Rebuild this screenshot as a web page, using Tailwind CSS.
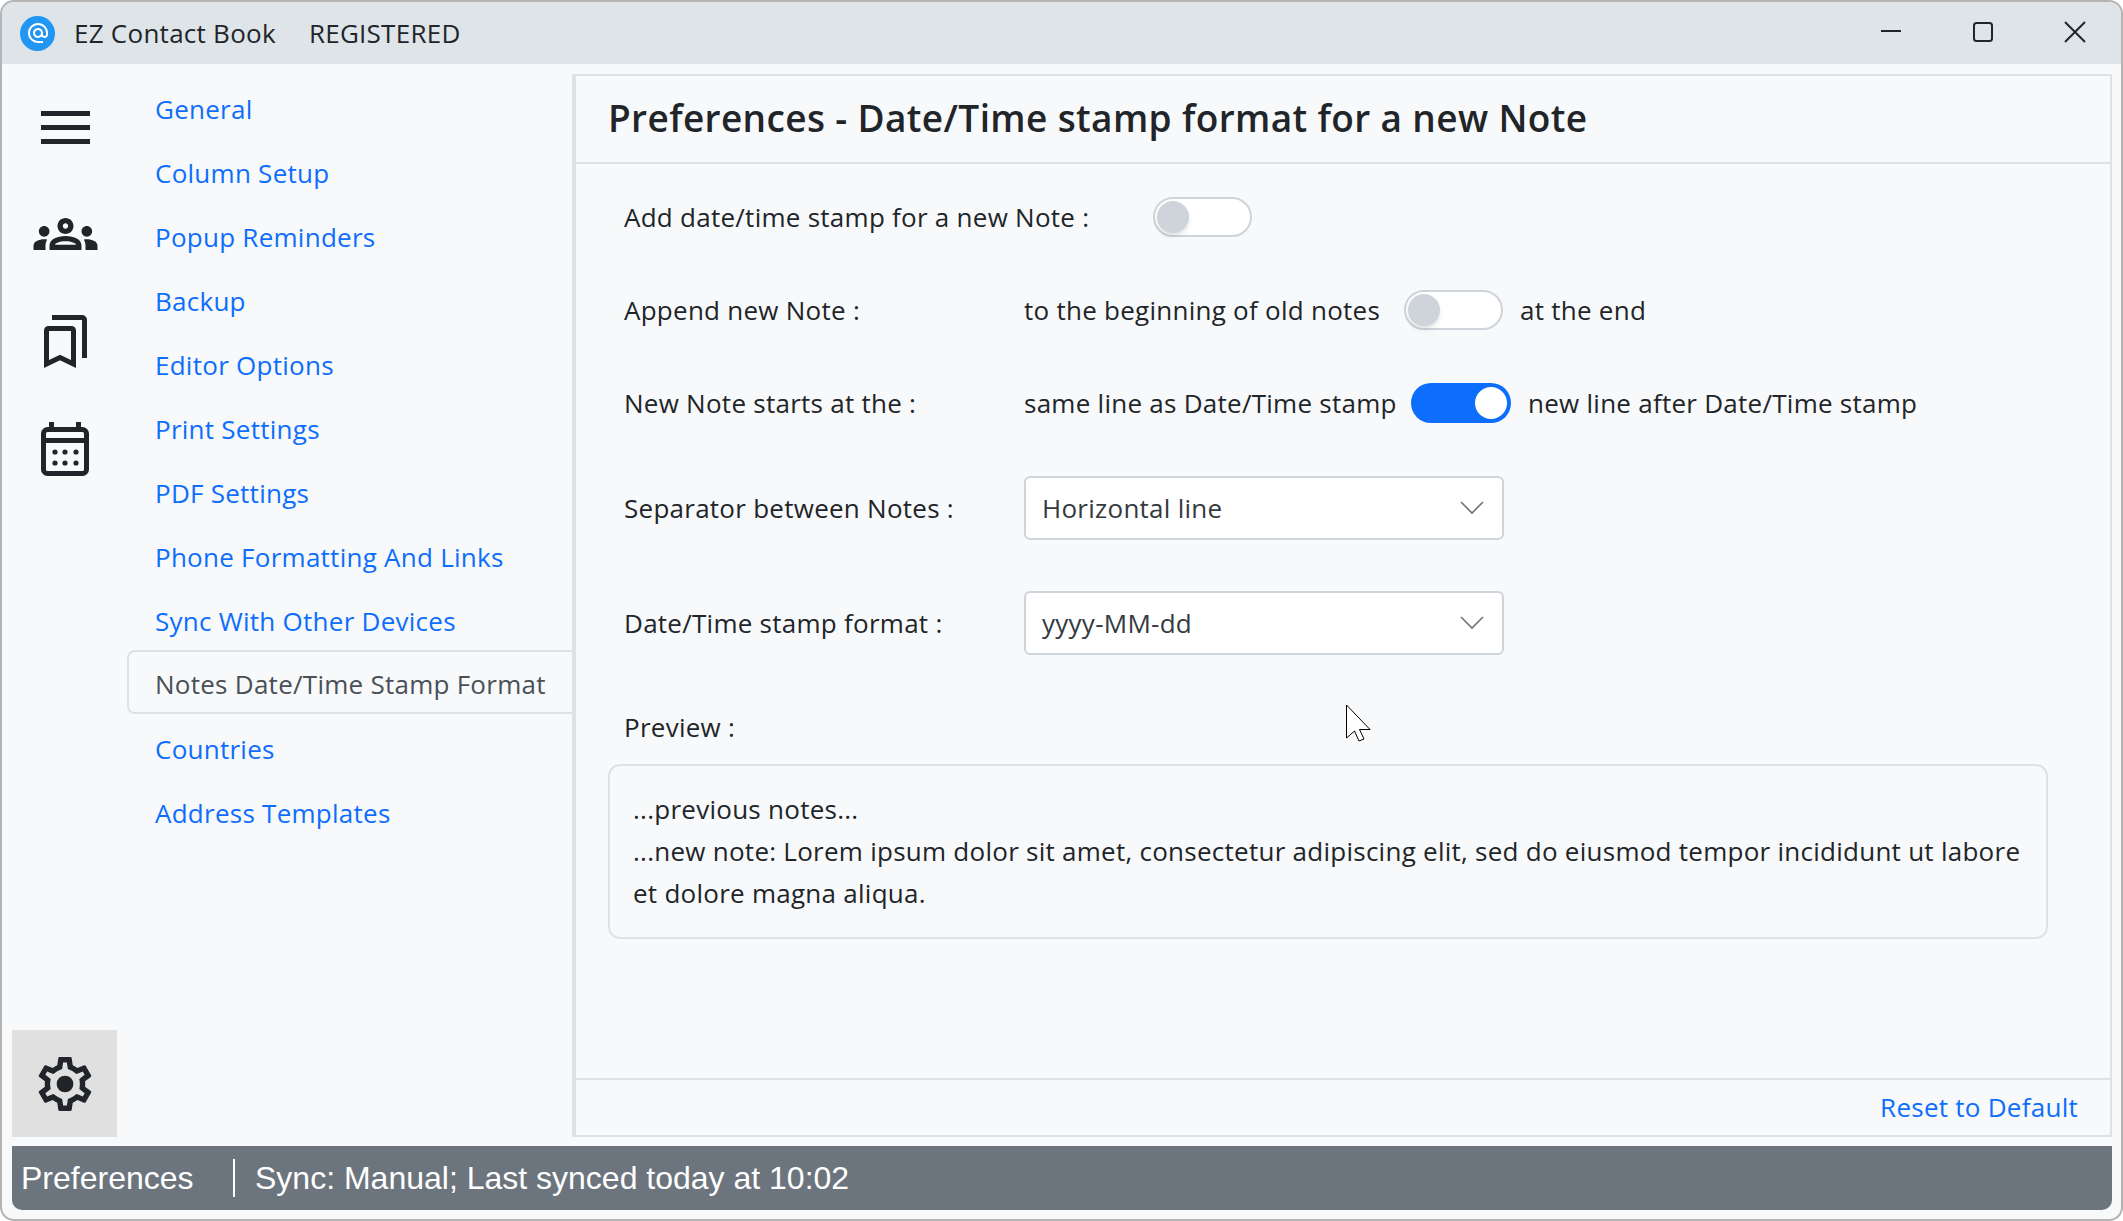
<!DOCTYPE html>
<html lang="en">
<head>
  <meta charset="UTF-8" />
  <meta name="viewport" content="width=device-width, initial-scale=1.0" />
  <title>EZ Contact Book</title>
  <script src="https://cdn.jsdelivr.net/npm/@tailwindcss/browser@4"></script>
</head>
<body class="bg-white font-['Open_Sans',sans-serif] text-[#212529] overflow-hidden">

<div class="relative w-[2123px] h-[1221px] flex flex-col bg-[#f8f9fa] border-2 border-[#b4b4b4] rounded-[14px] overflow-hidden text-[26px] tracking-[0.01em]">

  <!-- Title bar -->
  <div class="h-[62px] shrink-0 bg-[#dee4e7] flex items-center pl-[18px]">
    <div class="w-[35px] h-[35px] rounded-full bg-[#2196f3] flex items-center justify-center">
      <svg class="w-[24px] h-[24px]" viewBox="0 0 24 24" fill="#fff"><path d="M12 1.95c-5.52 0-10 4.48-10 10s4.48 10 10 10h5v-2h-5c-4.34 0-8-3.66-8-8s3.66-8 8-8 8 3.66 8 8v1.43c0 .79-.71 1.57-1.5 1.57s-1.5-.78-1.5-1.57v-1.43c0-2.76-2.24-5-5-5s-5 2.24-5 5 2.24 5 5 5c1.38 0 2.64-.56 3.54-1.47.65.89 1.77 1.47 2.96 1.47 1.97 0 3.5-1.6 3.5-3.57v-1.43c0-5.52-4.48-10-10-10zm0 13c-1.66 0-3-1.34-3-3s1.34-3 3-3 3 1.34 3 3-1.34 3-3 3z"/></svg>
    </div>
    <span class="ml-[19px]">EZ Contact Book</span>
    <span class="ml-[33px]">REGISTERED</span>
    <div class="ml-auto flex items-center pr-[35px] pb-[2px] gap-[70px]">
      <svg class="w-[22px] h-[22px]" viewBox="0 0 22 22" fill="none" stroke="#212529" stroke-width="2"><path d="M1 10h20"/></svg>
      <svg class="w-[22px] h-[22px]" viewBox="0 0 22 22" fill="none" stroke="#212529" stroke-width="2"><rect x="2" y="2" width="18" height="18" rx="2.5"/></svg>
      <svg class="w-[22px] h-[22px]" viewBox="0 0 22 22" fill="none" stroke="#212529" stroke-width="2"><path d="M1 1l20 20M21 1L1 21"/></svg>
    </div>
  </div>

  <!-- Body -->
  <div class="flex-1 min-h-0 flex pt-[10px] pl-[10px] pr-[9px]">

    <!-- Icon rail -->
    <div class="w-[105px] shrink-0 flex flex-col">
      <div class="h-[107px] flex items-center justify-center pl-[2px]">
        <svg class="w-[49px] h-[33px]" viewBox="0 0 49 33" fill="#212529"><rect width="49" height="5"/><rect y="14" width="49" height="5"/><rect y="28" width="49" height="5"/></svg>
      </div>
      <div class="h-[107px] flex items-center justify-center pl-[2px] pb-[2px]">
        <svg class="w-[65px] h-[32px]" viewBox="0 6 24 12" fill="#212529"><path d="M4,13c1.1,0,2-0.9,2-2c0-1.1-0.9-2-2-2s-2,0.9-2,2C2,12.1,2.9,13,4,13z M5.13,14.1C4.76,14.04,4.39,14,4,14 c-0.99,0-1.93,0.21-2.78,0.58C0.48,14.9,0,15.62,0,16.43V18l4.5,0v-1.61C4.5,15.56,4.73,14.78,5.13,14.1z M20,13c1.1,0,2-0.9,2-2 c0-1.1-0.9-2-2-2s-2,0.9-2,2C18,12.1,18.9,13,20,13z M24,16.43c0-0.81-0.48-1.53-1.22-1.85C21.93,14.21,20.99,14,20,14 c-0.39,0-0.76,0.04-1.13,0.1c0.4,0.68,0.63,1.46,0.63,2.29V18l4.5,0V16.43z M16.24,13.65c-1.17-0.52-2.61-0.9-4.24-0.9 c-1.63,0-3.07,0.39-4.24,0.9C6.68,14.13,6,15.21,6,16.39V18h12v-1.61C18,15.21,17.32,14.13,16.24,13.65z M8.07,16 c0.09-0.23,0.13-0.39,0.91-0.69c0.97-0.38,1.99-0.56,3.02-0.56s2.05,0.18,3.02,0.56c0.77,0.3,0.81,0.46,0.91,0.69H8.07z M12,8 c0.55,0,1,0.45,1,1s-0.45,1-1,1s-1-0.45-1-1S11.45,8,12,8 M12,6c-1.66,0-3,1.34-3,3c0,1.66,1.34,3,3,3s3-1.34,3-3 C15,7.34,13.66,6,12,6L12,6z"/></svg>
      </div>
      <div class="h-[107px] flex items-center justify-center pl-[2px]">
        <svg class="w-[43px] h-[53px]" viewBox="0 0 43 53" fill="none" stroke="#212529" stroke-width="5"><path d="M2.5 49V15.5a2 2 0 0 1 2-2H27.5a2 2 0 0 1 2 2V49L16 42.5Z"/><path d="M8 2.500H38a2.500 2.500 0 0 1 2.500 2.500V43"/></svg>
      </div>
      <div class="h-[107px] flex items-center justify-center pl-[1px]">
        <svg class="w-[48px] h-[54px]" viewBox="0 0 48 54" fill="#212529"><rect x="2.5" y="7.5" width="43" height="44" rx="4" fill="none" stroke="#212529" stroke-width="5"/><rect x="3" y="16" width="42" height="5"/><rect x="8" width="5" height="9"/><rect x="35" width="5" height="9"/><circle cx="14" cy="30" r="2.600"/><circle cx="24" cy="30" r="2.600"/><circle cx="35" cy="30" r="2.600"/><circle cx="14" cy="41" r="2.600"/><circle cx="24" cy="41" r="2.600"/><circle cx="35" cy="41" r="2.600"/></svg>
      </div>
      <div class="mt-auto h-[107px] bg-[#e0e0e0] flex items-center justify-center">
        <svg class="w-[54px] h-[54px]" viewBox="2 2 20 20" fill="#212529"><path d="M19.43 12.98c.04-.32.07-.64.07-.98 0-.34-.03-.66-.07-.98l2.11-1.65c.19-.15.24-.42.12-.64l-2-3.46c-.09-.16-.26-.25-.44-.25-.06 0-.12.01-.17.03l-2.49 1c-.52-.4-1.08-.73-1.69-.98l-.38-2.65C14.46 2.18 14.25 2 14 2h-4c-.25 0-.46.18-.49.42l-.38 2.65c-.61.25-1.17.59-1.69.98l-2.49-1c-.06-.02-.12-.03-.18-.03-.17 0-.34.09-.43.25l-2 3.46c-.13.22-.07.49.12.64l2.11 1.65c-.04.32-.07.65-.07.98 0 .33.03.66.07.98l-2.11 1.65c-.19.15-.24.42-.12.64l2 3.46c.09.16.26.25.44.25.06 0 .12-.01.17-.03l2.49-1c.52.4 1.08.73 1.69.98l.38 2.65c.03.24.24.42.49.42h4c.25 0 .46-.18.49-.42l.38-2.65c.61-.25 1.17-.59 1.69-.98l2.49 1c.06.02.12.03.18.03.17 0 .34-.09.43-.25l2-3.46c.12-.22.07-.49-.12-.64l-2.11-1.65zm-1.98-1.71c.04.31.05.52.05.73 0 .21-.02.43-.05.73l-.14 1.13.89.7 1.08.84-.7 1.21-1.27-.51-1.04-.42-.9.68c-.43.32-.84.56-1.25.73l-1.06.43-.16 1.13-.2 1.35h-1.4l-.19-1.35-.16-1.13-1.06-.43c-.43-.18-.83-.41-1.23-.71l-.91-.7-1.06.43-1.27.51-.7-1.21 1.08-.84.89-.7-.14-1.13c-.03-.31-.05-.54-.05-.74s.02-.43.05-.73l.14-1.13-.89-.7-1.08-.84.7-1.21 1.27.51 1.04.42.9-.68c.43-.32.84-.56 1.25-.73l1.06-.43.16-1.13.2-1.35h1.39l.19 1.35.16 1.13 1.06.43c.43.18.83.41 1.23.71l.91.7 1.06-.43 1.27-.51.7 1.21-1.07.85-.89.7.14 1.13z"/><circle cx="12" cy="12" r="3.1"/></svg>
      </div>
    </div>

    <!-- Preferences nav -->
    <div class="w-[445px] shrink-0 ml-[10px] text-[#0d6efd]">
      <div class="h-[64px] flex items-center pl-[28px] pt-[7px]">General</div>
      <div class="h-[64px] flex items-center pl-[28px] pt-[7px]">Column Setup</div>
      <div class="h-[64px] flex items-center pl-[28px] pt-[7px]">Popup Reminders</div>
      <div class="h-[64px] flex items-center pl-[28px] pt-[7px]">Backup</div>
      <div class="h-[64px] flex items-center pl-[28px] pt-[7px]">Editor Options</div>
      <div class="h-[64px] flex items-center pl-[28px] pt-[7px]">Print Settings</div>
      <div class="h-[64px] flex items-center pl-[28px] pt-[7px]">PDF Settings</div>
      <div class="h-[64px] flex items-center pl-[28px] pt-[7px]">Phone Formatting And Links</div>
      <div class="h-[64px] flex items-center pl-[28px] pt-[7px]">Sync With Other Devices</div>
      <div class="h-[64px] flex items-center pl-[26px] pt-[5px] text-[#495057] border-2 border-r-0 border-[#dee2e6] rounded-l-[8px]">Notes Date/Time Stamp Format</div>
      <div class="h-[64px] flex items-center pl-[28px] pt-[7px]">Countries</div>
      <div class="h-[64px] flex items-center pl-[28px] pt-[7px]">Address Templates</div>
    </div>

    <!-- Main panel -->
    <div class="flex-1 min-w-0 flex flex-col border-2 border-l-4 border-[#dee2e6]">
      <div class="h-[88px] shrink-0 border-b-2 border-[#dee2e6] flex items-center pl-[32px] pb-[3px] text-[37px] font-semibold tracking-[0.01em]">Preferences - Date/Time stamp format for a new Note</div>

      <div class="flex-1 min-h-0 pl-[48px] pt-[33px]">
        <div class="h-[40px] flex items-center">
          <span class="w-[529px] shrink-0">Add date/time stamp for a new Note :</span>
          <div class="w-[99px] h-[40px] rounded-full bg-white border-2 border-[#ced4da] p-[2px]"><div class="w-[32px] h-[32px] rounded-full bg-[#ced4da] shadow-md"></div></div>
        </div>
        <div class="h-[40px] mt-[53px] flex items-center">
          <span class="w-[400px] shrink-0">Append new Note :</span>
          <span class="w-[380px] shrink-0">to the beginning of old notes</span>
          <div class="w-[99px] h-[40px] rounded-full bg-white border-2 border-[#ced4da] p-[2px]"><div class="w-[32px] h-[32px] rounded-full bg-[#ced4da] shadow-md"></div></div>
          <span class="ml-[17px]">at the end</span>
        </div>
        <div class="h-[40px] mt-[53px] flex items-center">
          <span class="w-[400px] shrink-0">New Note starts at the :</span>
          <span class="w-[387px] shrink-0">same line as Date/Time stamp</span>
          <div class="w-[100px] h-[40px] rounded-full bg-[#0d6efd] p-[4px] flex justify-end"><div class="w-[32px] h-[32px] rounded-full bg-white"></div></div>
          <span class="ml-[17px]">new line after Date/Time stamp</span>
        </div>
        <div class="h-[64px] mt-[53px] flex items-center">
          <span class="w-[400px] shrink-0">Separator between Notes :</span>
          <div class="w-[480px] h-[64px] bg-white border-2 border-[#ced4da] rounded-[6px] flex items-center justify-between pl-[16px] pr-[18px] text-[#343a40]">
            <span>Horizontal line</span>
            <svg class="w-[24px] h-[14px]" viewBox="0 0 24 14" fill="none" stroke="#6c757d" stroke-width="1.6"><path d="M1 1l11 11L23 1"/></svg>
          </div>
        </div>
        <div class="h-[64px] mt-[51px] flex items-center">
          <span class="w-[400px] shrink-0">Date/Time stamp format :</span>
          <div class="w-[480px] h-[64px] bg-white border-2 border-[#ced4da] rounded-[6px] flex items-center justify-between pl-[16px] pr-[18px] text-[#343a40]">
            <span>yyyy-MM-dd</span>
            <svg class="w-[24px] h-[14px]" viewBox="0 0 24 14" fill="none" stroke="#6c757d" stroke-width="1.6"><path d="M1 1l11 11L23 1"/></svg>
          </div>
        </div>
        <div class="mt-[54px] h-[36px] flex items-center">Preview :</div>
        <div class="-ml-[16px] mt-[19px] w-[1440px] h-[175px] border-2 border-[#dee2e6] rounded-[12px] pl-[23px] pr-[20px] pt-[22px] leading-[42px]">
          <div>...previous notes...</div>
          <div>...new note: Lorem ipsum dolor sit amet, consectetur adipiscing elit, sed do eiusmod tempor incididunt ut labore et dolore magna aliqua.</div>
        </div>
      </div>

      <div class="h-[57px] shrink-0 border-t-2 border-[#dee2e6] flex items-center justify-end pr-[32px] text-[#0d6efd]">Reset to Default</div>
    </div>
  </div>

  <!-- Status bar -->
  <div class="h-[64px] shrink-0 mt-[9px] mb-[9px] ml-[10px] mr-[9px] bg-[#6c757d] rounded-b-[10px] flex items-center text-white font-['Liberation_Sans',sans-serif] text-[32px] tracking-normal">
    <span class="w-[221px] pl-[9px] shrink-0">Preferences</span>
    <div class="w-[2px] h-[38px] bg-white"></div>
    <span class="ml-[20px]">Sync: Manual; Last synced today at 10:02</span>
  </div>

  <!-- Mouse pointer -->
  <svg class="absolute left-[1343px] top-[702px] w-[26px] h-[40px]" viewBox="0 0 26 40" fill="#fff" stroke="#000" stroke-width="1"><path d="M1.5 1v33l8-7 4.500 10 5-2-4.500-9.500H25Z"/></svg>
</div>

</body>
</html>
